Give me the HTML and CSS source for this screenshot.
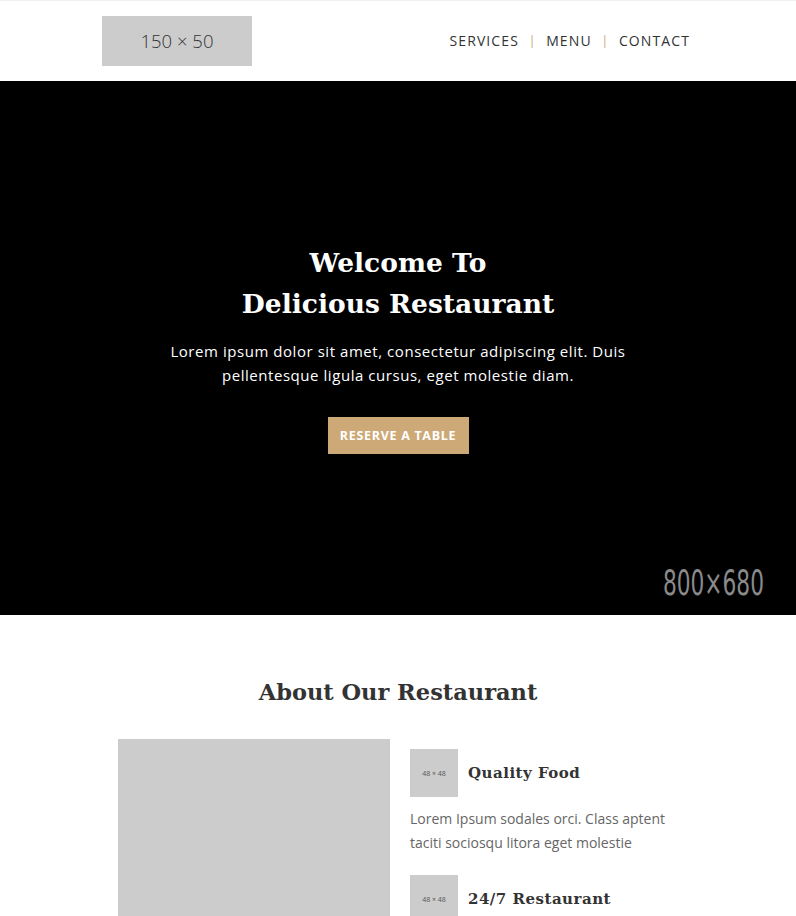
FILE: index.html
```html
<!DOCTYPE html>
<html lang="en">
<head>
<meta charset="utf-8">
<title>Delicious Restaurant</title>
<link rel="stylesheet" href="styles.css">
</head>
<body>
<header class="site-header">
  <div class="header-inner">
    <div class="logo">150 × 50</div>
    <nav class="nav">
      <a href="#">SERVICES</a>
      <span class="sep">|</span>
      <a href="#">MENU</a>
      <span class="sep">|</span>
      <a href="#">CONTACT</a>
    </nav>
  </div>
</header>
<section class="hero">
  <div class="hero-content">
    <h1 class="hero-title">Welcome To<br>Delicious Restaurant</h1>
    <p class="hero-text">Lorem ipsum dolor sit amet, consectetur adipiscing elit. Duis<br>pellentesque ligula cursus, eget molestie diam.</p>
    <a class="btn" href="#">RESERVE A TABLE</a>
  </div>
  <div class="hero-size">800×680</div>
</section>
<section class="about">
  <h2 class="about-title">About Our Restaurant</h2>
  <div class="about-grid">
    <div class="about-image"></div>
    <div class="features">
      <div class="feature">
        <div class="feature-head">
          <div class="icon-box">48 × 48</div>
          <h3 class="feature-title">Quality Food</h3>
        </div>
        <p class="feature-text">Lorem Ipsum sodales orci. Class aptent taciti sociosqu litora eget molestie</p>
      </div>
      <div class="feature">
        <div class="feature-head">
          <div class="icon-box">48 × 48</div>
          <h3 class="feature-title">24/7 Restaurant</h3>
        </div>
        <p class="feature-text">Lorem Ipsum sodales orci. Class aptent taciti sociosqu litora eget molestie</p>
      </div>
    </div>
  </div>
</section>
</body>
</html>
```
FILE: styles.css
```css
* { box-sizing: border-box; }
body {
  margin: 0;
  font-family: "Open Sans", "Liberation Sans", sans-serif;
  background: #fff;
  color: #333;
}
.site-header {
  border-top: 1px solid #f0f0f0;
  height: 81px;
  background: #fff;
}
.header-inner {
  width: 592px;
  margin: 0 auto;
  height: 80px;
  display: flex;
  align-items: center;
  justify-content: space-between;
}
.logo {
  width: 150px;
  height: 50px;
  margin-top: -1px;
  background: #ccc;
  color: #333;
  font-size: 18.5px;
  font-weight: 300;
  display: flex;
  align-items: center;
  justify-content: center;
}
.nav {
  display: flex;
  align-items: center;
  gap: 9.5px;
  padding-right: 4px;
  margin-top: -2px;
  font-size: 14px;
  letter-spacing: 1.1px;
}
.nav a {
  color: #333;
  text-decoration: none;
}
.sep {
  color: #cda977;
  font-size: 13px;
}
.hero {
  position: relative;
  height: 534px;
  background: #000;
  color: #fff;
  display: flex;
  justify-content: center;
  padding-top: 161px;
}
.hero-content {
  text-align: center;
}
.hero-title {
  margin: 0;
  font-family: "DejaVu Serif", "Liberation Serif", serif;
  font-size: 26.5px;
  line-height: 41px;
  font-weight: bold;
}
.hero-text {
  margin: 15px 0 0;
  font-size: 15px;
  line-height: 24px;
  letter-spacing: 0.55px;
}
.btn {
  display: inline-block;
  margin-top: 30px;
  width: 141px;
  height: 37px;
  line-height: 37px;
  background: #cda977;
  color: #fff;
  font-size: 12.5px;
  font-weight: bold;
  letter-spacing: 0.7px;
  text-decoration: none;
}
.hero-size {
  position: absolute;
  right: 32px;
  bottom: 12px;
  font-family: "DejaVu Sans", "Liberation Sans", sans-serif;
  font-size: 35px;
  line-height: 40px;
  color: #8a8a8a;
  transform: scaleX(0.62);
  transform-origin: right center;
}
.about {
  padding-top: 62px;
}
.about-title {
  margin: 0;
  text-align: center;
  font-family: "DejaVu Serif", "Liberation Serif", serif;
  font-size: 22.5px;
  line-height: 30px;
  font-weight: bold;
  color: #333;
}
.about-grid {
  width: 560px;
  margin: 32px auto 0;
  display: flex;
  gap: 20px;
}
.about-image {
  width: 272px;
  height: 300px;
  background: #ccc;
  flex: none;
}
.features {
  padding-top: 10px;
  flex: 1;
}
.feature-head {
  display: flex;
  align-items: center;
  gap: 10px;
}
.icon-box {
  width: 48px;
  height: 48px;
  background: #ccc;
  color: #555;
  font-size: 7px;
  display: flex;
  align-items: center;
  justify-content: center;
  flex: none;
}
.feature-title {
  margin: 0;
  font-family: "DejaVu Serif", "Liberation Serif", serif;
  font-size: 15px;
  font-weight: bold;
  letter-spacing: 0.5px;
  color: #333;
}
.feature-text {
  margin: 10px 0 20px;
  font-size: 14px;
  line-height: 24px;
  color: #666;
}
```
